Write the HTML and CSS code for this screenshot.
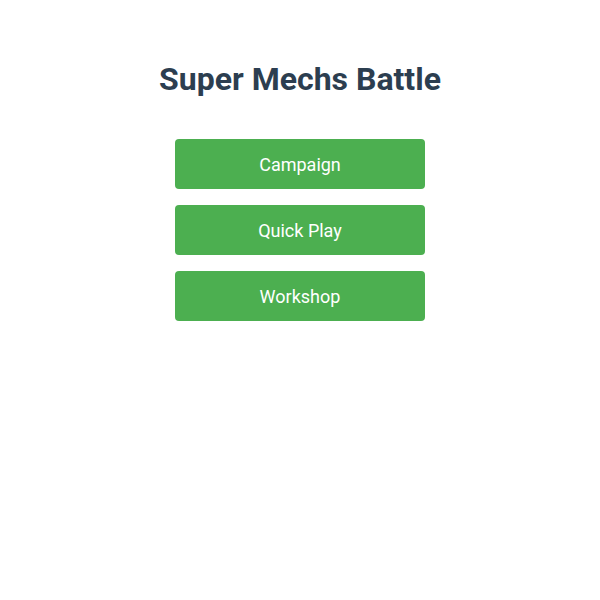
FILE: index.html
```html
<!DOCTYPE html>
<html lang="en">
<head>
    <meta charset="UTF-8">
    <meta name="viewport" content="width=device-width, initial-scale=1.0">
    <title>Super Mechs Battle</title>
    <link rel="stylesheet" href="styles.css">
</head>
<body>
    <main class="main-menu">
        <h1>Super Mechs Battle</h1>
        <div class="menu-buttons">
            <button class="menu-btn">Campaign</button>
            <button class="menu-btn">Quick Play</button>
            <button class="menu-btn">Workshop</button>
        </div>
    </main>
</body>
</html>
```

FILE: styles.css
```css
:root {
    --title-color: #2c3e50;
    --button-color: #4caf50;
}

* {
    margin: 0;
    padding: 0;
    box-sizing: border-box;
}

body {
    font-family: Roboto, "Liberation Sans", sans-serif;
    background-color: #fff;
}

.main-menu {
    display: flex;
    flex-direction: column;
    align-items: center;
    padding-top: 60px;
}

.main-menu h1 {
    font-size: 32px;
    font-weight: 700;
    color: var(--title-color);
    margin-bottom: 41px;
}

.menu-buttons {
    display: flex;
    flex-direction: column;
    gap: 16px;
}

.menu-btn {
    width: 250px;
    height: 50px;
    border: none;
    border-radius: 4px;
    background-color: var(--button-color);
    color: white;
    font-family: inherit;
    font-size: 18px;
    cursor: pointer;
}
```
